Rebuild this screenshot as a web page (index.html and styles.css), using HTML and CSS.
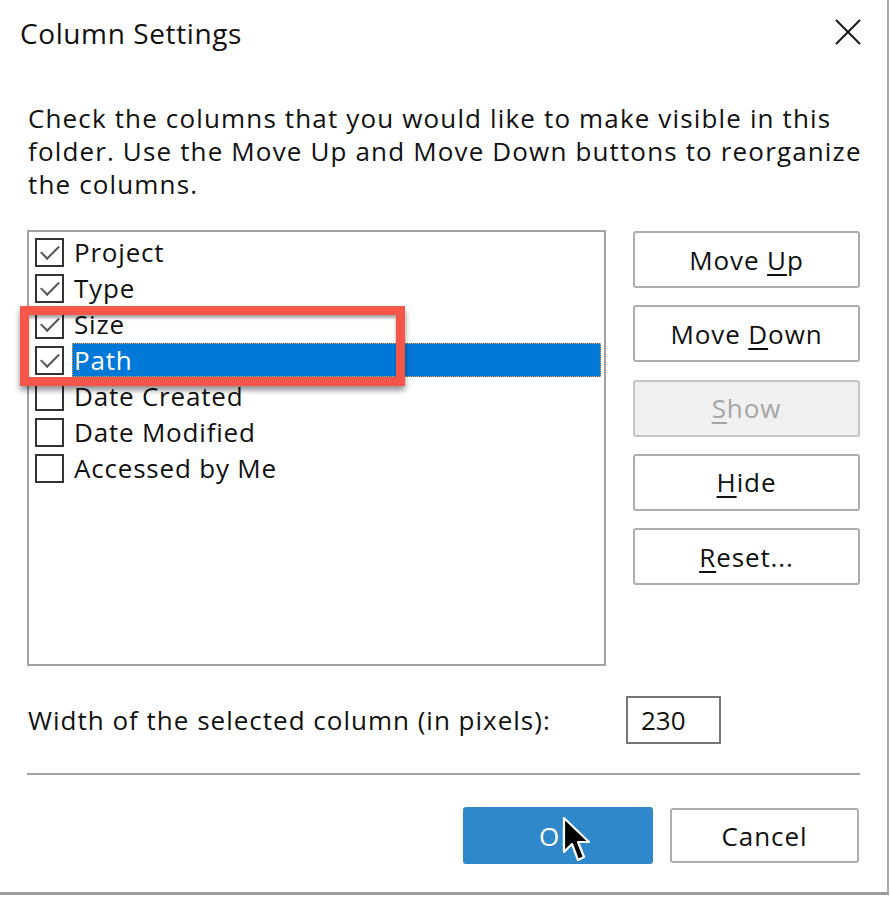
FILE: index.html
```html
<!DOCTYPE html>
<html>
<head>
    <title>Column Settings</title>
    <meta charset="utf-8">
    <link rel="stylesheet" href="styles.css">
</head>
<body>
    <div class="dialog">
        <div class="title-bar">
            <span class="title">Column Settings</span>
            <svg class="close-icon" width="28" height="28" viewBox="0 0 28 28">
                <path d="M2 2 L26 26 M26 2 L2 26" stroke="#1a1a1a" stroke-width="2" fill="none"/>
            </svg>
        </div>

        <p class="intro">Check the columns that you would like to make visible in this<br>folder. Use the Move Up and Move Down buttons to reorganize<br>the columns.</p>

        <div class="main-row">
            <div class="column-list">
                <div class="column-item">
                    <span class="check checked"></span><span class="label">Project</span>
                </div>
                <div class="column-item">
                    <span class="check checked"></span><span class="label">Type</span>
                </div>
                <div class="column-item">
                    <span class="check checked"></span><span class="label">Size</span>
                </div>
                <div class="column-item selected">
                    <span class="check checked"></span><span class="label">Path</span>
                </div>
                <div class="column-item">
                    <span class="check"></span><span class="label">Date Created</span>
                </div>
                <div class="column-item">
                    <span class="check"></span><span class="label">Date Modified</span>
                </div>
                <div class="column-item">
                    <span class="check"></span><span class="label">Accessed by Me</span>
                </div>
            </div>

            <div class="side-buttons">
                <button class="btn">Move <u>U</u>p</button>
                <button class="btn">Move <u>D</u>own</button>
                <button class="btn" disabled><u>S</u>how</button>
                <button class="btn"><u>H</u>ide</button>
                <button class="btn"><u>R</u>eset...</button>
            </div>
        </div>

        <div class="width-row">
            <span class="width-label">Width of the selected column (in pixels):</span>
            <div class="width-input">230</div>
        </div>

        <div class="separator"></div>

        <div class="footer">
            <button class="btn btn-primary">OK</button>
            <button class="btn btn-footer">Cancel</button>
        </div>

        <!-- annotation + pointer drawn over the dialog -->
        <div class="highlight-box"></div>
        <svg class="cursor" width="30" height="48" viewBox="0 0 30 48">
            <path d="M2 2 L2 36 L10 28 L16 44 L22 41 L16 26 L27 26 Z" fill="#000" stroke="#fff" stroke-width="2.2" stroke-linejoin="round"/>
        </svg>
    </div>
</body>
</html>
```

FILE: styles.css
```css
body {
    margin: 0;
    background: #fff;
    font-family: "Open Sans", "Noto Sans", sans-serif;
    color: #111;
}

.dialog {
    position: relative;
    width: 887px;
    height: 892px;
    background: #fff;
    border-right: 2px solid #a9a9a9;
    border-bottom: 3px solid #9a9a9a;
}

.title-bar {
    display: flex;
    align-items: center;
    justify-content: space-between;
    height: 66px;
    padding: 0 25px 0 20px;
}

.title {
    font-size: 28px;
    letter-spacing: 0.6px;
    color: #111;
}

.close-icon {
    margin-top: -2px;
}

.intro {
    margin: 36px 0 0 28px;
    font-size: 26px;
    font-weight: 500;
    letter-spacing: 1.15px;
    line-height: 33px;
}

.main-row {
    display: flex;
    gap: 27px;
    margin: 29px 0 0 27px;
}

.column-list {
    width: 569px;
    height: 430px;
    border: 2px solid #a0a0a0;
    padding: 2px 0 0 6px;
    box-sizing: content-box;
}

.column-item {
    display: flex;
    align-items: center;
    height: 36px;
    margin-right: 3px;
    font-size: 26px;
    font-weight: 500;
    letter-spacing: 0.8px;
}

.check {
    width: 25px;
    height: 25px;
    border: 2px solid #333;
    margin-right: 8px;
    flex-shrink: 0;
    position: relative;
}

.check.checked::after {
    content: "";
    position: absolute;
    left: 8px;
    top: 1px;
    width: 8px;
    height: 16px;
    border-right: 2px solid #555;
    border-bottom: 2px solid #555;
    transform: rotate(45deg);
}

.label {
    flex: 1;
    height: 34px;
    line-height: 32px;
    padding-left: 1px;
    box-sizing: border-box;
    border: 1px solid transparent;
}

.column-item.selected .label {
    background: #0078d7;
    color: #fff;
    border: 1px dotted #f3a53c;
}

.side-buttons {
    display: flex;
    flex-direction: column;
    gap: 17.25px;
    width: 227px;
    margin-top: 1px;
}

.btn {
    height: 57px;
    border: 2px solid #adadad;
    border-radius: 3px;
    background: #fff;
    font-family: "Open Sans", "Noto Sans", sans-serif;
    font-size: 26px;
    font-weight: 500;
    letter-spacing: 0.9px;
    color: #111;
    padding: 0;
}

.btn u {
    text-decoration-thickness: 2px;
    text-underline-offset: 4px;
}

.btn:disabled {
    background: #f0f0f0;
    border-color: #c4c4c4;
    color: #a5a5a5;
}

.width-row {
    display: flex;
    align-items: center;
    margin: 30px 0 0 28px;
}

.width-label {
    font-size: 26px;
    font-weight: 500;
    letter-spacing: 1px;
    width: 598px;
}

.width-input {
    width: 78px;
    height: 44px;
    border: 2px solid #777;
    padding-left: 13px;
    font-size: 26px;
    font-weight: 500;
    line-height: 44px;
}

.separator {
    height: 2px;
    background: #a3a3a3;
    margin: 29px 27px 0 27px;
}

.footer {
    display: flex;
    justify-content: flex-end;
    gap: 17px;
    margin: 32px 28px 0 0;
}

.btn-primary {
    width: 190px;
    height: 57px;
    background: #2f88c9;
    border-color: #2f88c9;
    color: #fff;
}

.btn-footer {
    width: 189px;
    height: 55px;
    margin-top: 1px;
}

.highlight-box {
    position: absolute;
    left: 20px;
    top: 306px;
    width: 367px;
    height: 62px;
    border: 9px solid #f4574a;
    box-shadow: 0 4px 6px rgba(0, 0, 0, 0.45), inset 0 3px 3px rgba(0, 0, 0, 0.35);
}

.cursor {
    position: absolute;
    left: 562px;
    top: 816px;
}
```
